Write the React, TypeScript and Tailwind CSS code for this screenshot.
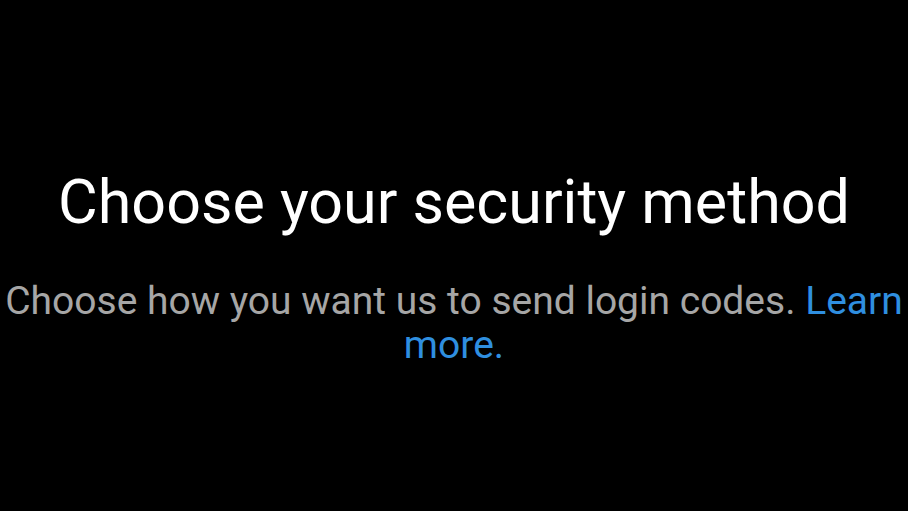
export default function App() {
  return (
    <div className="min-h-screen w-full bg-black flex flex-col items-center pt-[166px] font-['Roboto',sans-serif]">
      {/* Title */}
      <h1 className="text-[61px] leading-[72px] text-white font-normal text-center whitespace-nowrap">
        Choose your security method
      </h1>

      {/* Description */}
      <p className="mt-[41px] text-[39px] leading-[44px] text-[#a6a6a6] text-center">
        Choose how you want us to send login codes.{" "}
        <a href="#" className="text-[#2f8fe0]">
          Learn more.
        </a>
      </p>
    </div>
  );
}
